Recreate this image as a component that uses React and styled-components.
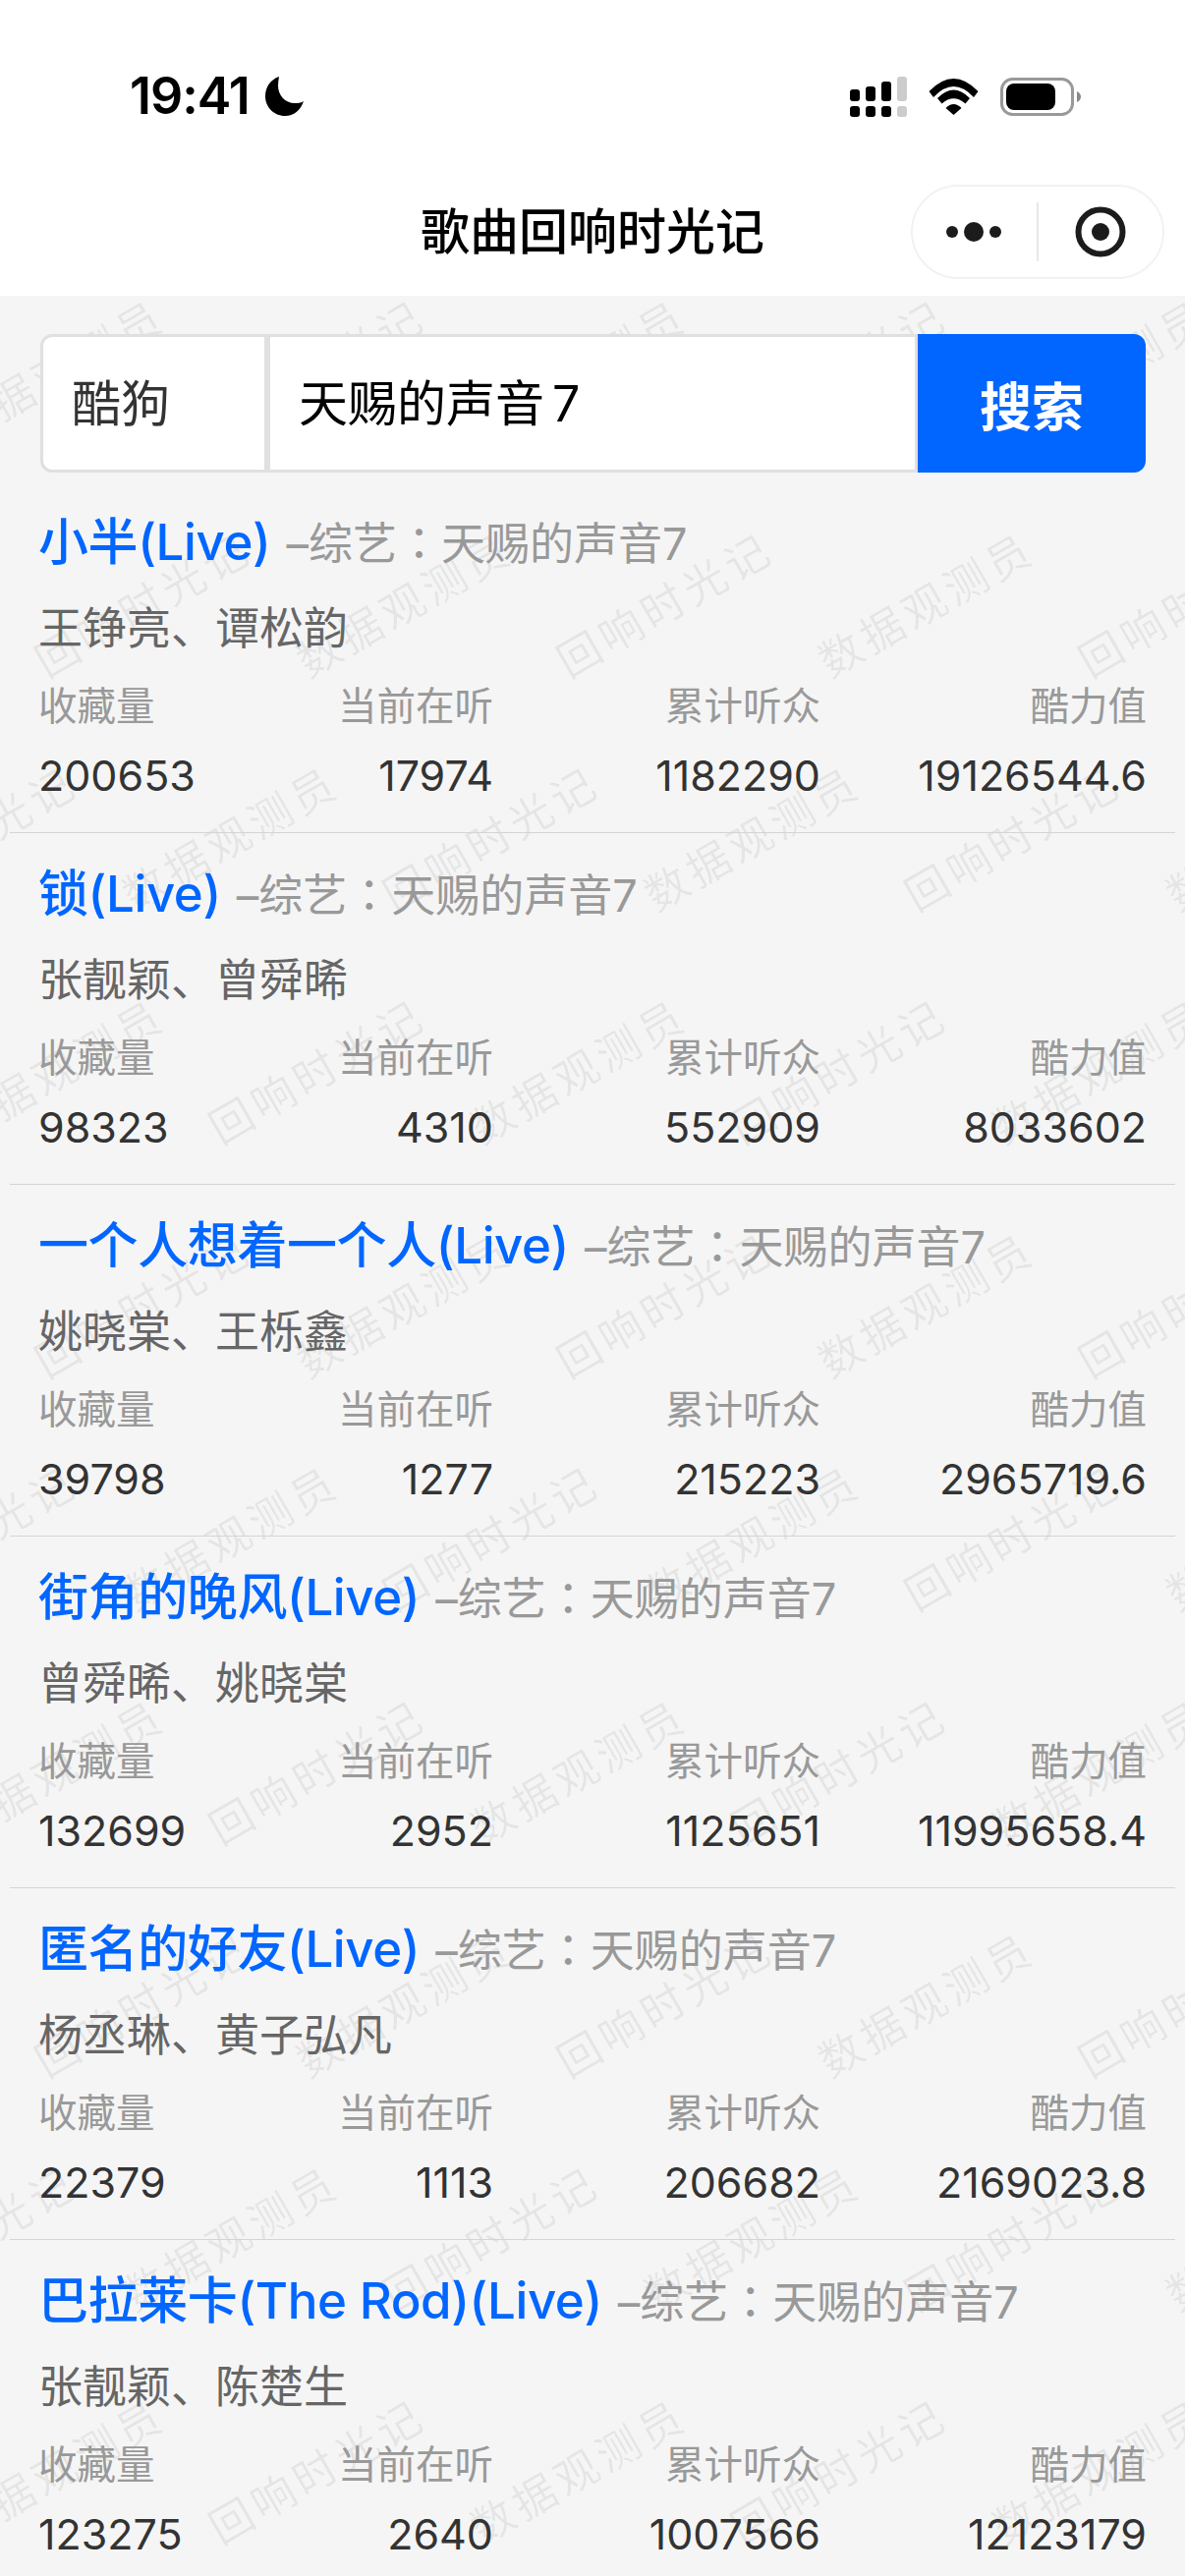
import styled, { createGlobalStyle } from 'styled-components';

const SONGS = [
  { name: '小半(Live)', singers: '王铮亮、谭松韵', stats: ['200653', '17974', '1182290', '19126544.6'] },
  { name: '锁(Live)', singers: '张靓颖、曾舜晞', stats: ['98323', '4310', '552909', '8033602'] },
  { name: '一个人想着一个人(Live)', singers: '姚晓棠、王栎鑫', stats: ['39798', '1277', '215223', '2965719.6'] },
  { name: '街角的晚风(Live)', singers: '曾舜晞、姚晓棠', stats: ['132699', '2952', '1125651', '11995658.4'] },
  { name: '匿名的好友(Live)', singers: '杨丞琳、黄子弘凡', stats: ['22379', '1113', '206682', '2169023.8'] },
  { name: '巴拉莱卡(The Rod)(Live)', singers: '张靓颖、陈楚生', stats: ['123275', '2640', '1007566', '12123179'] },
];

const LABELS = ['收藏量', '当前在听', '累计听众', '酷力值'];
const MARK_TEXTS = ['回响时光记', '数据观测员'];
const MARK_ROWS = [-1, 0, 1, 2, 3, 4, 5, 6, 7, 8, 9];
const MARK_STEP = 265.5;

// each watermark row slides 177px left of the one above, the two texts alternate every step
const markLayout = (n) => {
  const base = 677 - 177 * n + 531 * 4;
  const first = base % MARK_STEP;
  const center = first > MARK_STEP / 2 ? first - MARK_STEP : first;
  const steps = Math.round((base - center) / MARK_STEP);
  return { shift: center - MARK_STEP / 2, start: steps % 2 };
};

const GlobalStyle = createGlobalStyle`
  html, body {
    margin: 0;
    padding: 0;
    height: 2622px;
    overflow: hidden;
    background: #f5f5f5;
  }
  * {
    box-sizing: border-box;
  }
`;

const Page = styled.div`
  width: 1206px;
  height: 2622px;
  overflow: hidden;
  background: #f5f5f5;
  font-family: Inter, 'Noto Sans CJK SC', sans-serif;
`;

const Header = styled.header`
  height: 301px;
  background: #fff;
`;

const StatusBar = styled.div`
  height: 187px;
  padding: 77px 106px 0 132px;
  display: flex;
  justify-content: space-between;
  align-items: flex-start;
`;

const TimeBox = styled.div`
  display: flex;
  align-items: center;
  gap: 16px;
  height: 42px;
`;

const Time = styled.span`
  font-family: Inter, sans-serif;
  font-size: 52px;
  font-weight: 600;
  line-height: 42px;
  letter-spacing: -1px;
  color: #000;
`;

const StatusIcons = styled.div`
  display: flex;
  align-items: center;
  gap: 22px;
  height: 42px;
`;

const NavBar = styled.div`
  height: 96px;
  display: grid;
  grid-template-columns: 1fr auto 1fr;
  align-items: center;
`;

const NavTitle = styled.h1`
  grid-column: 2;
  margin: 0;
  font-size: 50px;
  font-weight: 500;
  line-height: 98px;
  color: #000;
`;

const Capsule = styled.div`
  grid-column: 3;
  justify-self: end;
  margin-right: 21px;
  width: 258px;
  height: 96px;
  border: 2px solid #f2f2f2;
  border-radius: 48px;
  display: flex;
  align-items: center;
`;

const CapsuleButton = styled.div`
  flex: 1;
  display: flex;
  justify-content: center;
  align-items: center;
`;

const CapsuleDivider = styled.div`
  width: 2px;
  height: 60px;
  background: #e8e8e8;
`;

const Main = styled.main`
  position: relative;
  height: 2321px;
  overflow: hidden;
`;

const Watermarks = styled.div`
  position: absolute;
  top: -41px;
  left: 0;
  right: 0;
  z-index: 0;
  pointer-events: none;
`;

const MarkRow = styled.div`
  display: flex;
  height: 237.5px;
  align-items: center;
  margin-left: ${(p) => p.$shift}px;
`;

const Mark = styled.span`
  flex: none;
  width: 265.5px;
  text-align: center;
  white-space: nowrap;
  font-size: 44px;
  letter-spacing: 5px;
  line-height: 50px;
  color: rgba(0, 0, 0, 0.065);
  transform: rotate(-30deg);
`;

const Content = styled.div`
  position: relative;
  z-index: 1;
  padding-top: 39px;
`;

const SearchBar = styled.div`
  height: 141px;
  margin: 0 40px 9px 41px;
  display: flex;
`;

const SearchCell = styled.div`
  display: flex;
  align-items: center;
  height: 141px;
  background: #fff;
  border: 3px solid #e0e0e0;
  font-size: 50px;
  line-height: 60px;
`;

const SourceCell = styled(SearchCell)`
  width: 231px;
  padding-left: 29px;
  border-radius: 12px 0 0 12px;
  color: #333;
`;

const KeywordCell = styled(SearchCell)`
  flex: 1;
  padding-left: 29px;
  color: #000;
  word-spacing: -6px;
`;

const SearchButton = styled.div`
  width: 232px;
  height: 141px;
  display: flex;
  justify-content: center;
  align-items: center;
  background: #0066ff;
  border-radius: 0 12px 12px 0;
  color: #fff;
  font-size: 53px;
  font-weight: 700;
`;

const SongRow = styled.section`
  height: 358px;
  margin: 0 10px;
  padding: 28px 29px 0 29px;
  border-bottom: 1px solid #d4d4d4;
`;

const TitleLine = styled.div`
  display: flex;
  align-items: baseline;
  height: 66px;
  line-height: 66px;
  white-space: nowrap;
`;

const SongName = styled.span`
  font-size: 51px;
  font-weight: 500;
  letter-spacing: -0.4px;
  color: #0066ff;
`;

const SongFrom = styled.span`
  margin-left: 16px;
  font-size: 45px;
  color: #999;
`;

const Colon = styled.span`
  font-family: 'Noto Sans CJK TC', sans-serif;
`;

const Singers = styled.div`
  margin-top: 26px;
  height: 60px;
  font-size: 45px;
  line-height: 60px;
  color: #666;
`;

const StatGrid = styled.div`
  display: grid;
  grid-template-columns: 132px 331px 333px 332px;
  text-align: right;
`;

const StatLabel = styled.div`
  margin-top: 24px;
  height: 50px;
  font-size: 39.5px;
  line-height: 50px;
  color: #999;
  white-space: nowrap;
  &:first-child {
    text-align: left;
  }
`;

const StatValue = styled.div`
  margin-top: 15px;
  height: 60px;
  font-size: 43px;
  line-height: 60px;
  color: #333;
  white-space: nowrap;
  &:nth-child(5) {
    text-align: left;
  }
`;

const MoonIcon = () => (
  <svg width="40" height="40" viewBox="0 0 40 40">
    <path
      d="M14 0C5 3 0 11 0 20C0 31 9 40 20 40C29 40 36 34 39 25C36 27 33 27 30 27C20 27 13 19 13 9C13 6 13.5 3 14 0Z"
      fill="#000"
    />
  </svg>
);

const SignalIcon = () => (
  <svg width="58" height="41" viewBox="0 0 58 41">
    <rect x="0" y="13" width="10" height="12" rx="3" fill="#000" />
    <rect x="16" y="10" width="10" height="15" rx="3" fill="#000" />
    <rect x="32" y="5" width="10" height="20" rx="3" fill="#000" />
    <rect x="48" y="0" width="10" height="25" rx="3" fill="#ccc" />
    <rect x="0" y="30" width="10" height="11" rx="3" fill="#000" />
    <rect x="16" y="30" width="10" height="11" rx="3" fill="#000" />
    <rect x="32" y="30" width="10" height="11" rx="3" fill="#000" />
    <rect x="48" y="30" width="10" height="11" rx="3" fill="#ccc" />
  </svg>
);

const WifiIcon = () => (
  <svg width="51" height="37" viewBox="0 0 51 37">
    <path d="M0.5 13Q25.5 -13 50.5 13L46 19Q25.5 -3 5 19Z" fill="#000" />
    <path d="M9 20Q25.5 3 42 20L37.5 25.5Q25.5 15 13.5 25.5Z" fill="#000" />
    <path d="M17.5 30Q25.5 22 33.5 30L25.5 37Z" fill="#000" />
  </svg>
);

const BatteryIcon = () => (
  <svg width="82" height="39" viewBox="0 0 82 39">
    <rect x="1.5" y="1.5" width="72" height="36" rx="11" fill="none" stroke="#999" strokeWidth="3" />
    <rect x="6" y="6" width="50" height="27" rx="8" fill="#000" />
    <path d="M78 14C80.5 15 82 17 82 19.5C82 22 80.5 24 78 25Z" fill="#888" />
  </svg>
);

const DotsIcon = () => (
  <svg width="58" height="20" viewBox="0 0 58 20">
    <circle cx="6" cy="10" r="6" fill="#1c1c1c" />
    <circle cx="28" cy="10" r="10" fill="#1c1c1c" />
    <circle cx="50" cy="10" r="6" fill="#1c1c1c" />
  </svg>
);

const TargetIcon = () => (
  <svg width="52" height="52" viewBox="0 0 52 52">
    <circle cx="26" cy="26" r="22.5" fill="none" stroke="#1c1c1c" strokeWidth="6" />
    <circle cx="26" cy="26" r="9" fill="#1c1c1c" />
  </svg>
);

const SongItem = ({ song }) => (
  <SongRow>
    <TitleLine>
      <SongName>{song.name}</SongName>
      <SongFrom>
        –综艺<Colon>：</Colon>天赐的声音7
      </SongFrom>
    </TitleLine>
    <Singers>{song.singers}</Singers>
    <StatGrid>
      {LABELS.map((label) => (
        <StatLabel key={label}>{label}</StatLabel>
      ))}
      {song.stats.map((value, i) => (
        <StatValue key={i}>{value}</StatValue>
      ))}
    </StatGrid>
  </SongRow>
);

const App = () => {
  return (
    <>
      <GlobalStyle />
      <Page>
        <Header>
          <StatusBar>
            <TimeBox>
              <Time>19:41</Time>
              <MoonIcon />
            </TimeBox>
            <StatusIcons>
              <SignalIcon />
              <WifiIcon />
              <BatteryIcon />
            </StatusIcons>
          </StatusBar>
          <NavBar>
            <NavTitle>歌曲回响时光记</NavTitle>
            <Capsule>
              <CapsuleButton>
                <DotsIcon />
              </CapsuleButton>
              <CapsuleDivider />
              <CapsuleButton>
                <TargetIcon />
              </CapsuleButton>
            </Capsule>
          </NavBar>
        </Header>
        <Main>
          <Watermarks>
            {MARK_ROWS.map((n) => {
              const { shift, start } = markLayout(n);
              return (
                <MarkRow key={n} $shift={shift}>
                  {[0, 1, 2, 3, 4, 5].map((i) => (
                    <Mark key={i}>{MARK_TEXTS[(start + i) % 2]}</Mark>
                  ))}
                </MarkRow>
              );
            })}
          </Watermarks>
          <Content>
            <SearchBar>
              <SourceCell>酷狗</SourceCell>
              <KeywordCell>天赐的声音 7</KeywordCell>
              <SearchButton>搜索</SearchButton>
            </SearchBar>
            {SONGS.map((song) => (
              <SongItem key={song.name} song={song} />
            ))}
          </Content>
        </Main>
      </Page>
    </>
  );
};

export default App;
